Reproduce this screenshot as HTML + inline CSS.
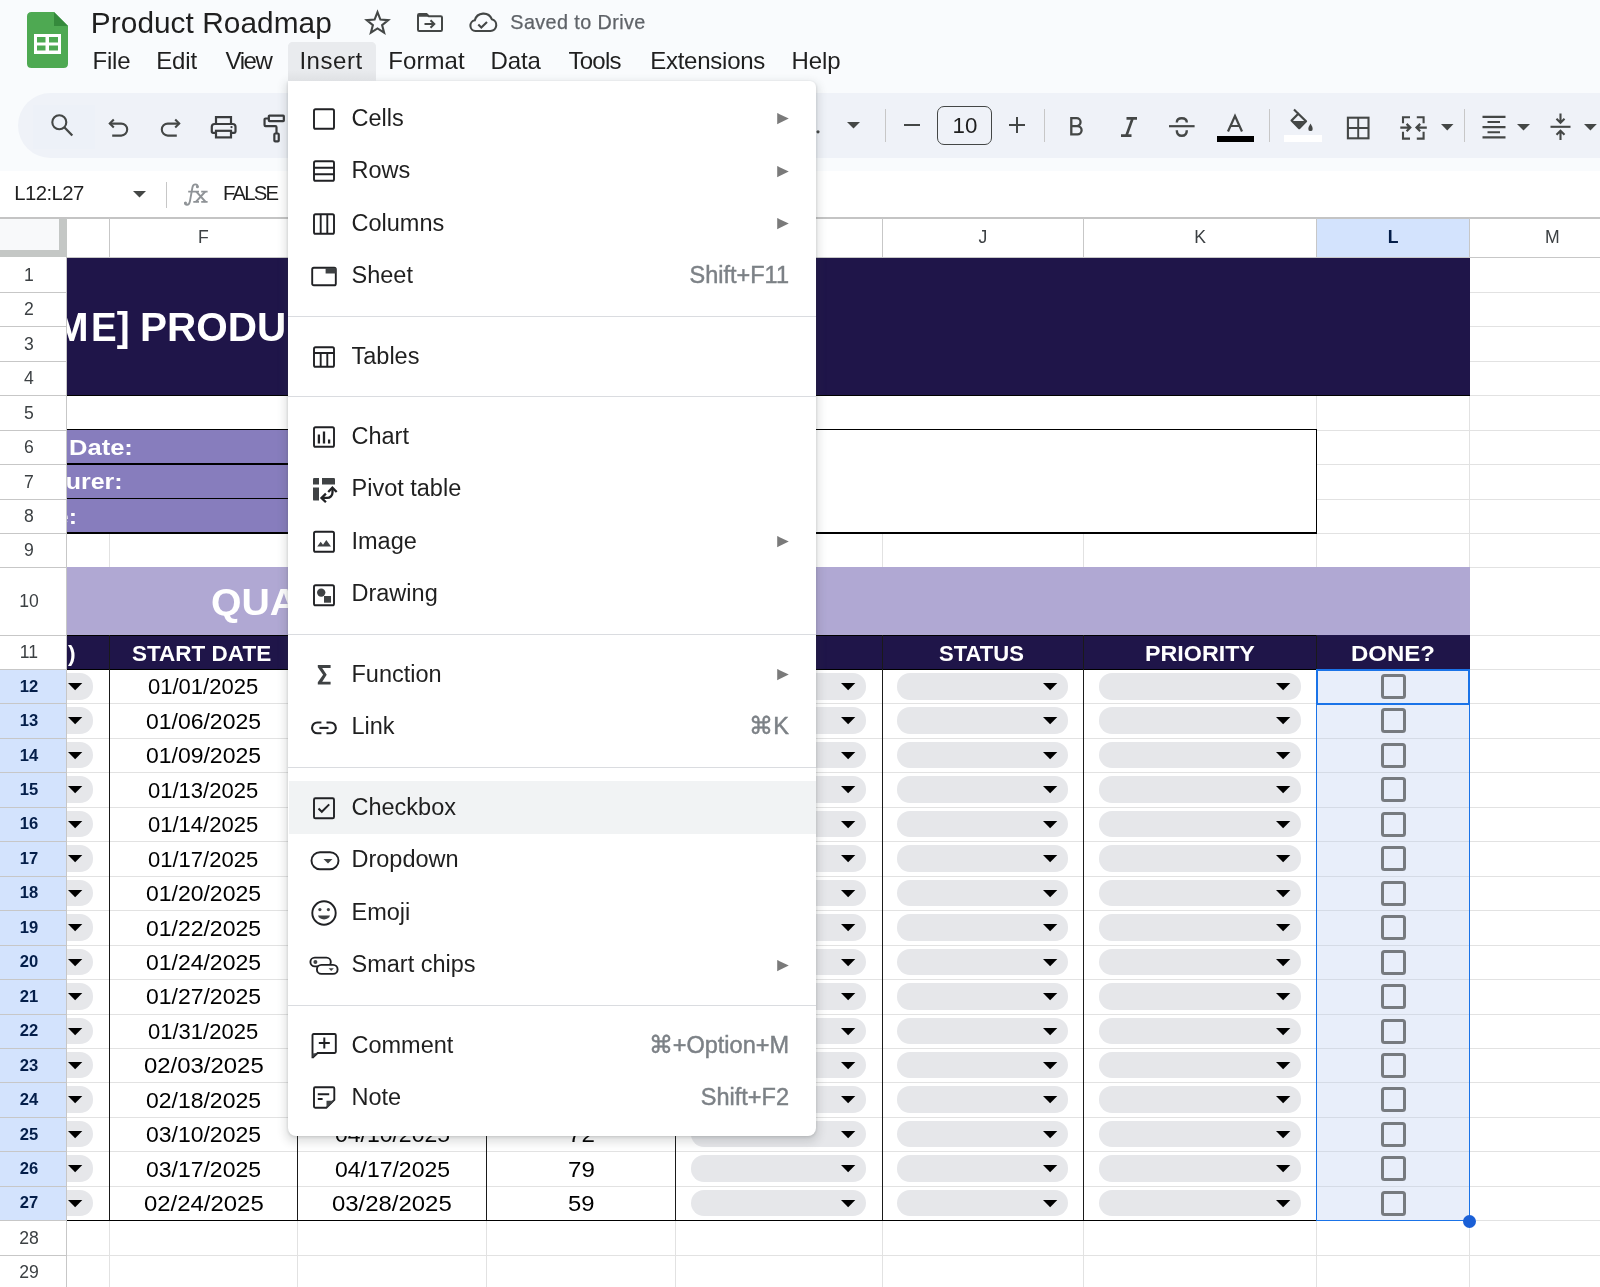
<!DOCTYPE html><html><head><meta charset="utf-8"><style>html,body{margin:0;padding:0;}body{width:1600px;height:1287px;overflow:hidden;position:relative;background:#f9fbfd;font-family:"Liberation Sans", sans-serif;}svg{display:block}</style></head><body><div style="position:absolute;left:0;top:0;width:1600px;height:1287px;overflow:hidden;will-change:transform">
<div style="position:absolute;left:0.00px;top:171.00px;width:1600.00px;height:1116.00px;background:#fff"></div>
<div style="position:absolute;left:67.00px;top:292.00px;width:1533.00px;height:1.00px;background:#e2e2e2"></div>
<div style="position:absolute;left:67.00px;top:326.00px;width:1533.00px;height:1.00px;background:#e2e2e2"></div>
<div style="position:absolute;left:67.00px;top:361.00px;width:1533.00px;height:1.00px;background:#e2e2e2"></div>
<div style="position:absolute;left:67.00px;top:395.00px;width:1533.00px;height:1.00px;background:#e2e2e2"></div>
<div style="position:absolute;left:67.00px;top:430.00px;width:1533.00px;height:1.00px;background:#e2e2e2"></div>
<div style="position:absolute;left:67.00px;top:464.00px;width:1533.00px;height:1.00px;background:#e2e2e2"></div>
<div style="position:absolute;left:67.00px;top:499.00px;width:1533.00px;height:1.00px;background:#e2e2e2"></div>
<div style="position:absolute;left:67.00px;top:533.00px;width:1533.00px;height:1.00px;background:#e2e2e2"></div>
<div style="position:absolute;left:67.00px;top:567.00px;width:1533.00px;height:1.00px;background:#e2e2e2"></div>
<div style="position:absolute;left:67.00px;top:635.00px;width:1533.00px;height:1.00px;background:#e2e2e2"></div>
<div style="position:absolute;left:67.00px;top:669.00px;width:1533.00px;height:1.00px;background:#e2e2e2"></div>
<div style="position:absolute;left:67.00px;top:703.00px;width:1533.00px;height:1.00px;background:#e2e2e2"></div>
<div style="position:absolute;left:67.00px;top:738.00px;width:1533.00px;height:1.00px;background:#e2e2e2"></div>
<div style="position:absolute;left:67.00px;top:772.00px;width:1533.00px;height:1.00px;background:#e2e2e2"></div>
<div style="position:absolute;left:67.00px;top:807.00px;width:1533.00px;height:1.00px;background:#e2e2e2"></div>
<div style="position:absolute;left:67.00px;top:841.00px;width:1533.00px;height:1.00px;background:#e2e2e2"></div>
<div style="position:absolute;left:67.00px;top:876.00px;width:1533.00px;height:1.00px;background:#e2e2e2"></div>
<div style="position:absolute;left:67.00px;top:910.00px;width:1533.00px;height:1.00px;background:#e2e2e2"></div>
<div style="position:absolute;left:67.00px;top:945.00px;width:1533.00px;height:1.00px;background:#e2e2e2"></div>
<div style="position:absolute;left:67.00px;top:979.00px;width:1533.00px;height:1.00px;background:#e2e2e2"></div>
<div style="position:absolute;left:67.00px;top:1014.00px;width:1533.00px;height:1.00px;background:#e2e2e2"></div>
<div style="position:absolute;left:67.00px;top:1048.00px;width:1533.00px;height:1.00px;background:#e2e2e2"></div>
<div style="position:absolute;left:67.00px;top:1082.00px;width:1533.00px;height:1.00px;background:#e2e2e2"></div>
<div style="position:absolute;left:67.00px;top:1117.00px;width:1533.00px;height:1.00px;background:#e2e2e2"></div>
<div style="position:absolute;left:67.00px;top:1151.00px;width:1533.00px;height:1.00px;background:#e2e2e2"></div>
<div style="position:absolute;left:67.00px;top:1186.00px;width:1533.00px;height:1.00px;background:#e2e2e2"></div>
<div style="position:absolute;left:67.00px;top:1220.00px;width:1533.00px;height:1.00px;background:#e2e2e2"></div>
<div style="position:absolute;left:67.00px;top:1255.00px;width:1533.00px;height:1.00px;background:#e2e2e2"></div>
<div style="position:absolute;left:67.00px;top:1289.00px;width:1533.00px;height:1.00px;background:#e2e2e2"></div>
<div style="position:absolute;left:109.00px;top:257.00px;width:1.00px;height:1030.00px;background:#e2e2e2"></div>
<div style="position:absolute;left:297.00px;top:257.00px;width:1.00px;height:1030.00px;background:#e2e2e2"></div>
<div style="position:absolute;left:486.00px;top:257.00px;width:1.00px;height:1030.00px;background:#e2e2e2"></div>
<div style="position:absolute;left:675.00px;top:257.00px;width:1.00px;height:1030.00px;background:#e2e2e2"></div>
<div style="position:absolute;left:882.00px;top:257.00px;width:1.00px;height:1030.00px;background:#e2e2e2"></div>
<div style="position:absolute;left:1083.00px;top:257.00px;width:1.00px;height:1030.00px;background:#e2e2e2"></div>
<div style="position:absolute;left:1316.00px;top:257.00px;width:1.00px;height:1030.00px;background:#e2e2e2"></div>
<div style="position:absolute;left:1469.00px;top:257.00px;width:1.00px;height:1030.00px;background:#e2e2e2"></div>
<div style="position:absolute;left:67.00px;top:258.00px;width:1403.00px;height:137.00px;background:#1f1549"></div>
<div style="position:absolute;left:67.00px;top:396.00px;width:1249.00px;height:34.00px;background:#fff"></div>
<div style="position:absolute;left:67.00px;top:430.00px;width:533.00px;height:104.00px;background:#877dbd"></div>
<div style="position:absolute;left:600.00px;top:430.00px;width:717.00px;height:104.00px;background:#fff"></div>
<div style="position:absolute;left:67.00px;top:428.80px;width:533.00px;height:1.40px;background:#000"></div>
<div style="position:absolute;left:67.00px;top:463.30px;width:533.00px;height:1.40px;background:#000"></div>
<div style="position:absolute;left:67.00px;top:497.80px;width:533.00px;height:1.40px;background:#000"></div>
<div style="position:absolute;left:67.00px;top:532.30px;width:533.00px;height:1.40px;background:#000"></div>
<div style="position:absolute;left:600.00px;top:428.80px;width:717.40px;height:1.40px;background:#000"></div>
<div style="position:absolute;left:600.00px;top:532.30px;width:717.40px;height:1.40px;background:#000"></div>
<div style="position:absolute;left:1316.00px;top:428.80px;width:1.40px;height:104.90px;background:#000"></div>
<div style="position:absolute;left:67.00px;top:394.60px;width:1403.00px;height:1.00px;background:#000"></div>
<div style="position:absolute;left:67.00px;top:567.00px;width:1403.00px;height:68.00px;background:#b0a8d3"></div>
<div style="position:absolute;left:67.00px;top:635.00px;width:1250.00px;height:34.00px;background:#1f1549"></div>
<div style="position:absolute;left:1317.00px;top:635.00px;width:153.00px;height:34.00px;background:#1f1549"></div>
<div style="position:absolute;left:67.00px;top:634.50px;width:1250.00px;height:1.50px;background:#000"></div>
<div style="position:absolute;left:67.00px;top:668.50px;width:1250.00px;height:1.50px;background:#000"></div>
<div style="position:absolute;left:108.55px;top:635.00px;width:1.40px;height:586.00px;background:#1a1a1a"></div>
<div style="position:absolute;left:296.55px;top:635.00px;width:1.40px;height:586.00px;background:#1a1a1a"></div>
<div style="position:absolute;left:485.55px;top:635.00px;width:1.40px;height:586.00px;background:#1a1a1a"></div>
<div style="position:absolute;left:674.55px;top:635.00px;width:1.40px;height:586.00px;background:#1a1a1a"></div>
<div style="position:absolute;left:881.55px;top:635.00px;width:1.40px;height:586.00px;background:#1a1a1a"></div>
<div style="position:absolute;left:1082.55px;top:635.00px;width:1.40px;height:586.00px;background:#1a1a1a"></div>
<div style="position:absolute;left:1315.55px;top:635.00px;width:1.40px;height:586.00px;background:#1a1a1a"></div>
<div style="position:absolute;left:67.00px;top:1219.70px;width:1250.00px;height:1.60px;background:#000"></div>
<div style="left:91.18px;position:absolute;top:302.84px;font-size:40.3px;line-height:49px;color:#fff;font-weight:bold;white-space:nowrap;transform:scaleX(0.9550);transform-origin:0 0;">E]</div>
<div style="right:1511.50px;position:absolute;top:302.84px;font-size:40.3px;line-height:49px;color:#fff;font-weight:bold;white-space:nowrap;">M</div>
<div style="left:139.79px;position:absolute;top:302.84px;font-size:40.3px;line-height:49px;color:#fff;font-weight:bold;white-space:nowrap;transform:scaleX(1.0044);transform-origin:0 0;">PRODU</div>
<div style="left:69.09px;position:absolute;top:432.87px;font-size:22.9px;line-height:28px;color:#fff;font-weight:bold;white-space:nowrap;transform:scaleX(1.1153);transform-origin:0 0;">Date:</div>
<div style="right:1477.00px;position:absolute;top:467.37px;font-size:22.9px;line-height:28px;color:#fff;font-weight:bold;white-space:nowrap;transform:scaleX(1.09);transform-origin:100% 0;">Manufacturer:</div>
<div style="right:1523.00px;position:absolute;top:501.87px;font-size:22.9px;line-height:28px;color:#fff;font-weight:bold;white-space:nowrap;transform:scaleX(1.09);transform-origin:100% 0;">Name:</div>
<div style="left:211.00px;position:absolute;top:579.88px;font-size:37px;line-height:45px;color:#fff;font-weight:bold;white-space:nowrap;transform:scaleX(1.06);transform-origin:0 0;">QUARTERLY ROADMAP</div>
<div style="right:1524.50px;position:absolute;top:638.57px;font-size:22.9px;line-height:28px;color:#fff;font-weight:bold;white-space:nowrap;">)</div>
<div style="left:132.10px;position:absolute;top:638.87px;font-size:22.9px;line-height:28px;color:#fff;font-weight:bold;white-space:nowrap;transform:scaleX(0.9828);transform-origin:0 0;">START DATE</div>
<div style="left:938.96px;position:absolute;top:638.87px;font-size:22.9px;line-height:28px;color:#fff;font-weight:bold;white-space:nowrap;transform:scaleX(0.9628);transform-origin:0 0;">STATUS</div>
<div style="left:1145.24px;position:absolute;top:638.87px;font-size:22.9px;line-height:28px;color:#fff;font-weight:bold;white-space:nowrap;transform:scaleX(1.0165);transform-origin:0 0;">PRIORITY</div>
<div style="left:1351.09px;position:absolute;top:638.87px;font-size:22.9px;line-height:28px;color:#fff;font-weight:bold;white-space:nowrap;transform:scaleX(1.0479);transform-origin:0 0;">DONE?</div>
<div style="position:absolute;left:1316.70px;top:669.00px;width:152.90px;height:551.00px;background:#e8eefa"></div>
<div style="position:absolute;left:1317.00px;top:703.00px;width:152.00px;height:1.00px;background:#d5dbe6"></div>
<div style="position:absolute;left:1317.00px;top:738.00px;width:152.00px;height:1.00px;background:#d5dbe6"></div>
<div style="position:absolute;left:1317.00px;top:772.00px;width:152.00px;height:1.00px;background:#d5dbe6"></div>
<div style="position:absolute;left:1317.00px;top:807.00px;width:152.00px;height:1.00px;background:#d5dbe6"></div>
<div style="position:absolute;left:1317.00px;top:841.00px;width:152.00px;height:1.00px;background:#d5dbe6"></div>
<div style="position:absolute;left:1317.00px;top:876.00px;width:152.00px;height:1.00px;background:#d5dbe6"></div>
<div style="position:absolute;left:1317.00px;top:910.00px;width:152.00px;height:1.00px;background:#d5dbe6"></div>
<div style="position:absolute;left:1317.00px;top:945.00px;width:152.00px;height:1.00px;background:#d5dbe6"></div>
<div style="position:absolute;left:1317.00px;top:979.00px;width:152.00px;height:1.00px;background:#d5dbe6"></div>
<div style="position:absolute;left:1317.00px;top:1014.00px;width:152.00px;height:1.00px;background:#d5dbe6"></div>
<div style="position:absolute;left:1317.00px;top:1048.00px;width:152.00px;height:1.00px;background:#d5dbe6"></div>
<div style="position:absolute;left:1317.00px;top:1082.00px;width:152.00px;height:1.00px;background:#d5dbe6"></div>
<div style="position:absolute;left:1317.00px;top:1117.00px;width:152.00px;height:1.00px;background:#d5dbe6"></div>
<div style="position:absolute;left:1317.00px;top:1151.00px;width:152.00px;height:1.00px;background:#d5dbe6"></div>
<div style="position:absolute;left:1317.00px;top:1186.00px;width:152.00px;height:1.00px;background:#d5dbe6"></div>
<div style="left:148.34px;position:absolute;top:674.38px;font-size:21.4px;line-height:26px;color:#000;font-weight:normal;white-space:nowrap;transform:scaleX(1.0297);transform-origin:0 0;">01/01/2025</div>
<div style="position:absolute;left:40.00px;top:673.00px;width:53.30px;height:26.50px;background:#e6e7ea;border-radius:13px"></div>
<svg style="position:absolute;left:68.0px;top:683.0px;overflow:visible;" width="14.3" height="7.2" viewBox="0 0 14.3 7.2"><path d="M0 0H14.3L7.15 7.2Z" fill="#000"/></svg>
<div style="position:absolute;left:690.90px;top:673.00px;width:175.10px;height:26.50px;background:#e6e7ea;border-radius:13px"></div>
<svg style="position:absolute;left:840.7px;top:683.0px;overflow:visible;" width="14.3" height="7.2" viewBox="0 0 14.3 7.2"><path d="M0 0H14.3L7.15 7.2Z" fill="#000"/></svg>
<div style="position:absolute;left:897.30px;top:673.00px;width:171.10px;height:26.50px;background:#e6e7ea;border-radius:13px"></div>
<svg style="position:absolute;left:1043.1px;top:683.0px;overflow:visible;" width="14.3" height="7.2" viewBox="0 0 14.3 7.2"><path d="M0 0H14.3L7.15 7.2Z" fill="#000"/></svg>
<div style="position:absolute;left:1099.20px;top:673.00px;width:202.10px;height:26.50px;background:#e6e7ea;border-radius:13px"></div>
<svg style="position:absolute;left:1276.0px;top:683.0px;overflow:visible;" width="14.3" height="7.2" viewBox="0 0 14.3 7.2"><path d="M0 0H14.3L7.15 7.2Z" fill="#000"/></svg>
<div style="position:absolute;left:1380.60px;top:674.00px;width:25.40px;height:25.00px;box-sizing:border-box;border:3px solid #767a7f;border-radius:3.5px"></div>
<div style="left:145.98px;position:absolute;top:708.83px;font-size:21.4px;line-height:26px;color:#000;font-weight:normal;white-space:nowrap;transform:scaleX(1.0738);transform-origin:0 0;">01/06/2025</div>
<div style="position:absolute;left:40.00px;top:707.45px;width:53.30px;height:26.50px;background:#e6e7ea;border-radius:13px"></div>
<svg style="position:absolute;left:68.0px;top:717.45px;overflow:visible;" width="14.3" height="7.2" viewBox="0 0 14.3 7.2"><path d="M0 0H14.3L7.15 7.2Z" fill="#000"/></svg>
<div style="position:absolute;left:690.90px;top:707.45px;width:175.10px;height:26.50px;background:#e6e7ea;border-radius:13px"></div>
<svg style="position:absolute;left:840.7px;top:717.45px;overflow:visible;" width="14.3" height="7.2" viewBox="0 0 14.3 7.2"><path d="M0 0H14.3L7.15 7.2Z" fill="#000"/></svg>
<div style="position:absolute;left:897.30px;top:707.45px;width:171.10px;height:26.50px;background:#e6e7ea;border-radius:13px"></div>
<svg style="position:absolute;left:1043.1px;top:717.45px;overflow:visible;" width="14.3" height="7.2" viewBox="0 0 14.3 7.2"><path d="M0 0H14.3L7.15 7.2Z" fill="#000"/></svg>
<div style="position:absolute;left:1099.20px;top:707.45px;width:202.10px;height:26.50px;background:#e6e7ea;border-radius:13px"></div>
<svg style="position:absolute;left:1276.0px;top:717.45px;overflow:visible;" width="14.3" height="7.2" viewBox="0 0 14.3 7.2"><path d="M0 0H14.3L7.15 7.2Z" fill="#000"/></svg>
<div style="position:absolute;left:1380.60px;top:708.45px;width:25.40px;height:25.00px;box-sizing:border-box;border:3px solid #767a7f;border-radius:3.5px"></div>
<div style="left:145.98px;position:absolute;top:743.28px;font-size:21.4px;line-height:26px;color:#000;font-weight:normal;white-space:nowrap;transform:scaleX(1.0738);transform-origin:0 0;">01/09/2025</div>
<div style="position:absolute;left:40.00px;top:741.90px;width:53.30px;height:26.50px;background:#e6e7ea;border-radius:13px"></div>
<svg style="position:absolute;left:68.0px;top:751.9px;overflow:visible;" width="14.3" height="7.2" viewBox="0 0 14.3 7.2"><path d="M0 0H14.3L7.15 7.2Z" fill="#000"/></svg>
<div style="position:absolute;left:690.90px;top:741.90px;width:175.10px;height:26.50px;background:#e6e7ea;border-radius:13px"></div>
<svg style="position:absolute;left:840.7px;top:751.9px;overflow:visible;" width="14.3" height="7.2" viewBox="0 0 14.3 7.2"><path d="M0 0H14.3L7.15 7.2Z" fill="#000"/></svg>
<div style="position:absolute;left:897.30px;top:741.90px;width:171.10px;height:26.50px;background:#e6e7ea;border-radius:13px"></div>
<svg style="position:absolute;left:1043.1px;top:751.9px;overflow:visible;" width="14.3" height="7.2" viewBox="0 0 14.3 7.2"><path d="M0 0H14.3L7.15 7.2Z" fill="#000"/></svg>
<div style="position:absolute;left:1099.20px;top:741.90px;width:202.10px;height:26.50px;background:#e6e7ea;border-radius:13px"></div>
<svg style="position:absolute;left:1276.0px;top:751.9px;overflow:visible;" width="14.3" height="7.2" viewBox="0 0 14.3 7.2"><path d="M0 0H14.3L7.15 7.2Z" fill="#000"/></svg>
<div style="position:absolute;left:1380.60px;top:742.90px;width:25.40px;height:25.00px;box-sizing:border-box;border:3px solid #767a7f;border-radius:3.5px"></div>
<div style="left:148.34px;position:absolute;top:777.73px;font-size:21.4px;line-height:26px;color:#000;font-weight:normal;white-space:nowrap;transform:scaleX(1.0297);transform-origin:0 0;">01/13/2025</div>
<div style="position:absolute;left:40.00px;top:776.35px;width:53.30px;height:26.50px;background:#e6e7ea;border-radius:13px"></div>
<svg style="position:absolute;left:68.0px;top:786.35px;overflow:visible;" width="14.3" height="7.2" viewBox="0 0 14.3 7.2"><path d="M0 0H14.3L7.15 7.2Z" fill="#000"/></svg>
<div style="position:absolute;left:690.90px;top:776.35px;width:175.10px;height:26.50px;background:#e6e7ea;border-radius:13px"></div>
<svg style="position:absolute;left:840.7px;top:786.35px;overflow:visible;" width="14.3" height="7.2" viewBox="0 0 14.3 7.2"><path d="M0 0H14.3L7.15 7.2Z" fill="#000"/></svg>
<div style="position:absolute;left:897.30px;top:776.35px;width:171.10px;height:26.50px;background:#e6e7ea;border-radius:13px"></div>
<svg style="position:absolute;left:1043.1px;top:786.35px;overflow:visible;" width="14.3" height="7.2" viewBox="0 0 14.3 7.2"><path d="M0 0H14.3L7.15 7.2Z" fill="#000"/></svg>
<div style="position:absolute;left:1099.20px;top:776.35px;width:202.10px;height:26.50px;background:#e6e7ea;border-radius:13px"></div>
<svg style="position:absolute;left:1276.0px;top:786.35px;overflow:visible;" width="14.3" height="7.2" viewBox="0 0 14.3 7.2"><path d="M0 0H14.3L7.15 7.2Z" fill="#000"/></svg>
<div style="position:absolute;left:1380.60px;top:777.35px;width:25.40px;height:25.00px;box-sizing:border-box;border:3px solid #767a7f;border-radius:3.5px"></div>
<div style="left:148.34px;position:absolute;top:812.18px;font-size:21.4px;line-height:26px;color:#000;font-weight:normal;white-space:nowrap;transform:scaleX(1.0297);transform-origin:0 0;">01/14/2025</div>
<div style="position:absolute;left:40.00px;top:810.80px;width:53.30px;height:26.50px;background:#e6e7ea;border-radius:13px"></div>
<svg style="position:absolute;left:68.0px;top:820.8px;overflow:visible;" width="14.3" height="7.2" viewBox="0 0 14.3 7.2"><path d="M0 0H14.3L7.15 7.2Z" fill="#000"/></svg>
<div style="position:absolute;left:690.90px;top:810.80px;width:175.10px;height:26.50px;background:#e6e7ea;border-radius:13px"></div>
<svg style="position:absolute;left:840.7px;top:820.8px;overflow:visible;" width="14.3" height="7.2" viewBox="0 0 14.3 7.2"><path d="M0 0H14.3L7.15 7.2Z" fill="#000"/></svg>
<div style="position:absolute;left:897.30px;top:810.80px;width:171.10px;height:26.50px;background:#e6e7ea;border-radius:13px"></div>
<svg style="position:absolute;left:1043.1px;top:820.8px;overflow:visible;" width="14.3" height="7.2" viewBox="0 0 14.3 7.2"><path d="M0 0H14.3L7.15 7.2Z" fill="#000"/></svg>
<div style="position:absolute;left:1099.20px;top:810.80px;width:202.10px;height:26.50px;background:#e6e7ea;border-radius:13px"></div>
<svg style="position:absolute;left:1276.0px;top:820.8px;overflow:visible;" width="14.3" height="7.2" viewBox="0 0 14.3 7.2"><path d="M0 0H14.3L7.15 7.2Z" fill="#000"/></svg>
<div style="position:absolute;left:1380.60px;top:811.80px;width:25.40px;height:25.00px;box-sizing:border-box;border:3px solid #767a7f;border-radius:3.5px"></div>
<div style="left:148.34px;position:absolute;top:846.63px;font-size:21.4px;line-height:26px;color:#000;font-weight:normal;white-space:nowrap;transform:scaleX(1.0297);transform-origin:0 0;">01/17/2025</div>
<div style="position:absolute;left:40.00px;top:845.25px;width:53.30px;height:26.50px;background:#e6e7ea;border-radius:13px"></div>
<svg style="position:absolute;left:68.0px;top:855.25px;overflow:visible;" width="14.3" height="7.2" viewBox="0 0 14.3 7.2"><path d="M0 0H14.3L7.15 7.2Z" fill="#000"/></svg>
<div style="position:absolute;left:690.90px;top:845.25px;width:175.10px;height:26.50px;background:#e6e7ea;border-radius:13px"></div>
<svg style="position:absolute;left:840.7px;top:855.25px;overflow:visible;" width="14.3" height="7.2" viewBox="0 0 14.3 7.2"><path d="M0 0H14.3L7.15 7.2Z" fill="#000"/></svg>
<div style="position:absolute;left:897.30px;top:845.25px;width:171.10px;height:26.50px;background:#e6e7ea;border-radius:13px"></div>
<svg style="position:absolute;left:1043.1px;top:855.25px;overflow:visible;" width="14.3" height="7.2" viewBox="0 0 14.3 7.2"><path d="M0 0H14.3L7.15 7.2Z" fill="#000"/></svg>
<div style="position:absolute;left:1099.20px;top:845.25px;width:202.10px;height:26.50px;background:#e6e7ea;border-radius:13px"></div>
<svg style="position:absolute;left:1276.0px;top:855.25px;overflow:visible;" width="14.3" height="7.2" viewBox="0 0 14.3 7.2"><path d="M0 0H14.3L7.15 7.2Z" fill="#000"/></svg>
<div style="position:absolute;left:1380.60px;top:846.25px;width:25.40px;height:25.00px;box-sizing:border-box;border:3px solid #767a7f;border-radius:3.5px"></div>
<div style="left:145.98px;position:absolute;top:881.08px;font-size:21.4px;line-height:26px;color:#000;font-weight:normal;white-space:nowrap;transform:scaleX(1.0738);transform-origin:0 0;">01/20/2025</div>
<div style="position:absolute;left:40.00px;top:879.70px;width:53.30px;height:26.50px;background:#e6e7ea;border-radius:13px"></div>
<svg style="position:absolute;left:68.0px;top:889.7px;overflow:visible;" width="14.3" height="7.2" viewBox="0 0 14.3 7.2"><path d="M0 0H14.3L7.15 7.2Z" fill="#000"/></svg>
<div style="position:absolute;left:690.90px;top:879.70px;width:175.10px;height:26.50px;background:#e6e7ea;border-radius:13px"></div>
<svg style="position:absolute;left:840.7px;top:889.7px;overflow:visible;" width="14.3" height="7.2" viewBox="0 0 14.3 7.2"><path d="M0 0H14.3L7.15 7.2Z" fill="#000"/></svg>
<div style="position:absolute;left:897.30px;top:879.70px;width:171.10px;height:26.50px;background:#e6e7ea;border-radius:13px"></div>
<svg style="position:absolute;left:1043.1px;top:889.7px;overflow:visible;" width="14.3" height="7.2" viewBox="0 0 14.3 7.2"><path d="M0 0H14.3L7.15 7.2Z" fill="#000"/></svg>
<div style="position:absolute;left:1099.20px;top:879.70px;width:202.10px;height:26.50px;background:#e6e7ea;border-radius:13px"></div>
<svg style="position:absolute;left:1276.0px;top:889.7px;overflow:visible;" width="14.3" height="7.2" viewBox="0 0 14.3 7.2"><path d="M0 0H14.3L7.15 7.2Z" fill="#000"/></svg>
<div style="position:absolute;left:1380.60px;top:880.70px;width:25.40px;height:25.00px;box-sizing:border-box;border:3px solid #767a7f;border-radius:3.5px"></div>
<div style="left:145.98px;position:absolute;top:915.53px;font-size:21.4px;line-height:26px;color:#000;font-weight:normal;white-space:nowrap;transform:scaleX(1.0738);transform-origin:0 0;">01/22/2025</div>
<div style="position:absolute;left:40.00px;top:914.15px;width:53.30px;height:26.50px;background:#e6e7ea;border-radius:13px"></div>
<svg style="position:absolute;left:68.0px;top:924.1500000000001px;overflow:visible;" width="14.3" height="7.2" viewBox="0 0 14.3 7.2"><path d="M0 0H14.3L7.15 7.2Z" fill="#000"/></svg>
<div style="position:absolute;left:690.90px;top:914.15px;width:175.10px;height:26.50px;background:#e6e7ea;border-radius:13px"></div>
<svg style="position:absolute;left:840.7px;top:924.1500000000001px;overflow:visible;" width="14.3" height="7.2" viewBox="0 0 14.3 7.2"><path d="M0 0H14.3L7.15 7.2Z" fill="#000"/></svg>
<div style="position:absolute;left:897.30px;top:914.15px;width:171.10px;height:26.50px;background:#e6e7ea;border-radius:13px"></div>
<svg style="position:absolute;left:1043.1px;top:924.1500000000001px;overflow:visible;" width="14.3" height="7.2" viewBox="0 0 14.3 7.2"><path d="M0 0H14.3L7.15 7.2Z" fill="#000"/></svg>
<div style="position:absolute;left:1099.20px;top:914.15px;width:202.10px;height:26.50px;background:#e6e7ea;border-radius:13px"></div>
<svg style="position:absolute;left:1276.0px;top:924.1500000000001px;overflow:visible;" width="14.3" height="7.2" viewBox="0 0 14.3 7.2"><path d="M0 0H14.3L7.15 7.2Z" fill="#000"/></svg>
<div style="position:absolute;left:1380.60px;top:915.15px;width:25.40px;height:25.00px;box-sizing:border-box;border:3px solid #767a7f;border-radius:3.5px"></div>
<div style="left:145.98px;position:absolute;top:949.98px;font-size:21.4px;line-height:26px;color:#000;font-weight:normal;white-space:nowrap;transform:scaleX(1.0738);transform-origin:0 0;">01/24/2025</div>
<div style="position:absolute;left:40.00px;top:948.60px;width:53.30px;height:26.50px;background:#e6e7ea;border-radius:13px"></div>
<svg style="position:absolute;left:68.0px;top:958.6px;overflow:visible;" width="14.3" height="7.2" viewBox="0 0 14.3 7.2"><path d="M0 0H14.3L7.15 7.2Z" fill="#000"/></svg>
<div style="position:absolute;left:690.90px;top:948.60px;width:175.10px;height:26.50px;background:#e6e7ea;border-radius:13px"></div>
<svg style="position:absolute;left:840.7px;top:958.6px;overflow:visible;" width="14.3" height="7.2" viewBox="0 0 14.3 7.2"><path d="M0 0H14.3L7.15 7.2Z" fill="#000"/></svg>
<div style="position:absolute;left:897.30px;top:948.60px;width:171.10px;height:26.50px;background:#e6e7ea;border-radius:13px"></div>
<svg style="position:absolute;left:1043.1px;top:958.6px;overflow:visible;" width="14.3" height="7.2" viewBox="0 0 14.3 7.2"><path d="M0 0H14.3L7.15 7.2Z" fill="#000"/></svg>
<div style="position:absolute;left:1099.20px;top:948.60px;width:202.10px;height:26.50px;background:#e6e7ea;border-radius:13px"></div>
<svg style="position:absolute;left:1276.0px;top:958.6px;overflow:visible;" width="14.3" height="7.2" viewBox="0 0 14.3 7.2"><path d="M0 0H14.3L7.15 7.2Z" fill="#000"/></svg>
<div style="position:absolute;left:1380.60px;top:949.60px;width:25.40px;height:25.00px;box-sizing:border-box;border:3px solid #767a7f;border-radius:3.5px"></div>
<div style="left:145.98px;position:absolute;top:984.43px;font-size:21.4px;line-height:26px;color:#000;font-weight:normal;white-space:nowrap;transform:scaleX(1.0738);transform-origin:0 0;">01/27/2025</div>
<div style="position:absolute;left:40.00px;top:983.05px;width:53.30px;height:26.50px;background:#e6e7ea;border-radius:13px"></div>
<svg style="position:absolute;left:68.0px;top:993.05px;overflow:visible;" width="14.3" height="7.2" viewBox="0 0 14.3 7.2"><path d="M0 0H14.3L7.15 7.2Z" fill="#000"/></svg>
<div style="position:absolute;left:690.90px;top:983.05px;width:175.10px;height:26.50px;background:#e6e7ea;border-radius:13px"></div>
<svg style="position:absolute;left:840.7px;top:993.05px;overflow:visible;" width="14.3" height="7.2" viewBox="0 0 14.3 7.2"><path d="M0 0H14.3L7.15 7.2Z" fill="#000"/></svg>
<div style="position:absolute;left:897.30px;top:983.05px;width:171.10px;height:26.50px;background:#e6e7ea;border-radius:13px"></div>
<svg style="position:absolute;left:1043.1px;top:993.05px;overflow:visible;" width="14.3" height="7.2" viewBox="0 0 14.3 7.2"><path d="M0 0H14.3L7.15 7.2Z" fill="#000"/></svg>
<div style="position:absolute;left:1099.20px;top:983.05px;width:202.10px;height:26.50px;background:#e6e7ea;border-radius:13px"></div>
<svg style="position:absolute;left:1276.0px;top:993.05px;overflow:visible;" width="14.3" height="7.2" viewBox="0 0 14.3 7.2"><path d="M0 0H14.3L7.15 7.2Z" fill="#000"/></svg>
<div style="position:absolute;left:1380.60px;top:984.05px;width:25.40px;height:25.00px;box-sizing:border-box;border:3px solid #767a7f;border-radius:3.5px"></div>
<div style="left:148.34px;position:absolute;top:1018.88px;font-size:21.4px;line-height:26px;color:#000;font-weight:normal;white-space:nowrap;transform:scaleX(1.0297);transform-origin:0 0;">01/31/2025</div>
<div style="position:absolute;left:40.00px;top:1017.50px;width:53.30px;height:26.50px;background:#e6e7ea;border-radius:13px"></div>
<svg style="position:absolute;left:68.0px;top:1027.5px;overflow:visible;" width="14.3" height="7.2" viewBox="0 0 14.3 7.2"><path d="M0 0H14.3L7.15 7.2Z" fill="#000"/></svg>
<div style="position:absolute;left:690.90px;top:1017.50px;width:175.10px;height:26.50px;background:#e6e7ea;border-radius:13px"></div>
<svg style="position:absolute;left:840.7px;top:1027.5px;overflow:visible;" width="14.3" height="7.2" viewBox="0 0 14.3 7.2"><path d="M0 0H14.3L7.15 7.2Z" fill="#000"/></svg>
<div style="position:absolute;left:897.30px;top:1017.50px;width:171.10px;height:26.50px;background:#e6e7ea;border-radius:13px"></div>
<svg style="position:absolute;left:1043.1px;top:1027.5px;overflow:visible;" width="14.3" height="7.2" viewBox="0 0 14.3 7.2"><path d="M0 0H14.3L7.15 7.2Z" fill="#000"/></svg>
<div style="position:absolute;left:1099.20px;top:1017.50px;width:202.10px;height:26.50px;background:#e6e7ea;border-radius:13px"></div>
<svg style="position:absolute;left:1276.0px;top:1027.5px;overflow:visible;" width="14.3" height="7.2" viewBox="0 0 14.3 7.2"><path d="M0 0H14.3L7.15 7.2Z" fill="#000"/></svg>
<div style="position:absolute;left:1380.60px;top:1018.50px;width:25.40px;height:25.00px;box-sizing:border-box;border:3px solid #767a7f;border-radius:3.5px"></div>
<div style="left:143.62px;position:absolute;top:1053.33px;font-size:21.4px;line-height:26px;color:#000;font-weight:normal;white-space:nowrap;transform:scaleX(1.1180);transform-origin:0 0;">02/03/2025</div>
<div style="position:absolute;left:40.00px;top:1051.95px;width:53.30px;height:26.50px;background:#e6e7ea;border-radius:13px"></div>
<svg style="position:absolute;left:68.0px;top:1061.95px;overflow:visible;" width="14.3" height="7.2" viewBox="0 0 14.3 7.2"><path d="M0 0H14.3L7.15 7.2Z" fill="#000"/></svg>
<div style="position:absolute;left:690.90px;top:1051.95px;width:175.10px;height:26.50px;background:#e6e7ea;border-radius:13px"></div>
<svg style="position:absolute;left:840.7px;top:1061.95px;overflow:visible;" width="14.3" height="7.2" viewBox="0 0 14.3 7.2"><path d="M0 0H14.3L7.15 7.2Z" fill="#000"/></svg>
<div style="position:absolute;left:897.30px;top:1051.95px;width:171.10px;height:26.50px;background:#e6e7ea;border-radius:13px"></div>
<svg style="position:absolute;left:1043.1px;top:1061.95px;overflow:visible;" width="14.3" height="7.2" viewBox="0 0 14.3 7.2"><path d="M0 0H14.3L7.15 7.2Z" fill="#000"/></svg>
<div style="position:absolute;left:1099.20px;top:1051.95px;width:202.10px;height:26.50px;background:#e6e7ea;border-radius:13px"></div>
<svg style="position:absolute;left:1276.0px;top:1061.95px;overflow:visible;" width="14.3" height="7.2" viewBox="0 0 14.3 7.2"><path d="M0 0H14.3L7.15 7.2Z" fill="#000"/></svg>
<div style="position:absolute;left:1380.60px;top:1052.95px;width:25.40px;height:25.00px;box-sizing:border-box;border:3px solid #767a7f;border-radius:3.5px"></div>
<div style="left:145.98px;position:absolute;top:1087.78px;font-size:21.4px;line-height:26px;color:#000;font-weight:normal;white-space:nowrap;transform:scaleX(1.0738);transform-origin:0 0;">02/18/2025</div>
<div style="position:absolute;left:40.00px;top:1086.40px;width:53.30px;height:26.50px;background:#e6e7ea;border-radius:13px"></div>
<svg style="position:absolute;left:68.0px;top:1096.4px;overflow:visible;" width="14.3" height="7.2" viewBox="0 0 14.3 7.2"><path d="M0 0H14.3L7.15 7.2Z" fill="#000"/></svg>
<div style="position:absolute;left:690.90px;top:1086.40px;width:175.10px;height:26.50px;background:#e6e7ea;border-radius:13px"></div>
<svg style="position:absolute;left:840.7px;top:1096.4px;overflow:visible;" width="14.3" height="7.2" viewBox="0 0 14.3 7.2"><path d="M0 0H14.3L7.15 7.2Z" fill="#000"/></svg>
<div style="position:absolute;left:897.30px;top:1086.40px;width:171.10px;height:26.50px;background:#e6e7ea;border-radius:13px"></div>
<svg style="position:absolute;left:1043.1px;top:1096.4px;overflow:visible;" width="14.3" height="7.2" viewBox="0 0 14.3 7.2"><path d="M0 0H14.3L7.15 7.2Z" fill="#000"/></svg>
<div style="position:absolute;left:1099.20px;top:1086.40px;width:202.10px;height:26.50px;background:#e6e7ea;border-radius:13px"></div>
<svg style="position:absolute;left:1276.0px;top:1096.4px;overflow:visible;" width="14.3" height="7.2" viewBox="0 0 14.3 7.2"><path d="M0 0H14.3L7.15 7.2Z" fill="#000"/></svg>
<div style="position:absolute;left:1380.60px;top:1087.40px;width:25.40px;height:25.00px;box-sizing:border-box;border:3px solid #767a7f;border-radius:3.5px"></div>
<div style="left:145.98px;position:absolute;top:1122.23px;font-size:21.4px;line-height:26px;color:#000;font-weight:normal;white-space:nowrap;transform:scaleX(1.0738);transform-origin:0 0;">03/10/2025</div>
<div style="left:334.73px;position:absolute;top:1122.23px;font-size:21.4px;line-height:26px;color:#000;font-weight:normal;white-space:nowrap;transform:scaleX(1.0738);transform-origin:0 0;">04/10/2025</div>
<div style="left:567.56px;position:absolute;top:1122.23px;font-size:21.4px;line-height:26px;color:#000;font-weight:normal;white-space:nowrap;transform:scaleX(1.1281);transform-origin:0 0;">72</div>
<div style="position:absolute;left:40.00px;top:1120.85px;width:53.30px;height:26.50px;background:#e6e7ea;border-radius:13px"></div>
<svg style="position:absolute;left:68.0px;top:1130.85px;overflow:visible;" width="14.3" height="7.2" viewBox="0 0 14.3 7.2"><path d="M0 0H14.3L7.15 7.2Z" fill="#000"/></svg>
<div style="position:absolute;left:690.90px;top:1120.85px;width:175.10px;height:26.50px;background:#e6e7ea;border-radius:13px"></div>
<svg style="position:absolute;left:840.7px;top:1130.85px;overflow:visible;" width="14.3" height="7.2" viewBox="0 0 14.3 7.2"><path d="M0 0H14.3L7.15 7.2Z" fill="#000"/></svg>
<div style="position:absolute;left:897.30px;top:1120.85px;width:171.10px;height:26.50px;background:#e6e7ea;border-radius:13px"></div>
<svg style="position:absolute;left:1043.1px;top:1130.85px;overflow:visible;" width="14.3" height="7.2" viewBox="0 0 14.3 7.2"><path d="M0 0H14.3L7.15 7.2Z" fill="#000"/></svg>
<div style="position:absolute;left:1099.20px;top:1120.85px;width:202.10px;height:26.50px;background:#e6e7ea;border-radius:13px"></div>
<svg style="position:absolute;left:1276.0px;top:1130.85px;overflow:visible;" width="14.3" height="7.2" viewBox="0 0 14.3 7.2"><path d="M0 0H14.3L7.15 7.2Z" fill="#000"/></svg>
<div style="position:absolute;left:1380.60px;top:1121.85px;width:25.40px;height:25.00px;box-sizing:border-box;border:3px solid #767a7f;border-radius:3.5px"></div>
<div style="left:145.98px;position:absolute;top:1156.68px;font-size:21.4px;line-height:26px;color:#000;font-weight:normal;white-space:nowrap;transform:scaleX(1.0738);transform-origin:0 0;">03/17/2025</div>
<div style="left:334.73px;position:absolute;top:1156.68px;font-size:21.4px;line-height:26px;color:#000;font-weight:normal;white-space:nowrap;transform:scaleX(1.0738);transform-origin:0 0;">04/17/2025</div>
<div style="left:567.57px;position:absolute;top:1156.68px;font-size:21.4px;line-height:26px;color:#000;font-weight:normal;white-space:nowrap;transform:scaleX(1.1248);transform-origin:0 0;">79</div>
<div style="position:absolute;left:40.00px;top:1155.30px;width:53.30px;height:26.50px;background:#e6e7ea;border-radius:13px"></div>
<svg style="position:absolute;left:68.0px;top:1165.3000000000002px;overflow:visible;" width="14.3" height="7.2" viewBox="0 0 14.3 7.2"><path d="M0 0H14.3L7.15 7.2Z" fill="#000"/></svg>
<div style="position:absolute;left:690.90px;top:1155.30px;width:175.10px;height:26.50px;background:#e6e7ea;border-radius:13px"></div>
<svg style="position:absolute;left:840.7px;top:1165.3000000000002px;overflow:visible;" width="14.3" height="7.2" viewBox="0 0 14.3 7.2"><path d="M0 0H14.3L7.15 7.2Z" fill="#000"/></svg>
<div style="position:absolute;left:897.30px;top:1155.30px;width:171.10px;height:26.50px;background:#e6e7ea;border-radius:13px"></div>
<svg style="position:absolute;left:1043.1px;top:1165.3000000000002px;overflow:visible;" width="14.3" height="7.2" viewBox="0 0 14.3 7.2"><path d="M0 0H14.3L7.15 7.2Z" fill="#000"/></svg>
<div style="position:absolute;left:1099.20px;top:1155.30px;width:202.10px;height:26.50px;background:#e6e7ea;border-radius:13px"></div>
<svg style="position:absolute;left:1276.0px;top:1165.3000000000002px;overflow:visible;" width="14.3" height="7.2" viewBox="0 0 14.3 7.2"><path d="M0 0H14.3L7.15 7.2Z" fill="#000"/></svg>
<div style="position:absolute;left:1380.60px;top:1156.30px;width:25.40px;height:25.00px;box-sizing:border-box;border:3px solid #767a7f;border-radius:3.5px"></div>
<div style="left:143.62px;position:absolute;top:1191.13px;font-size:21.4px;line-height:26px;color:#000;font-weight:normal;white-space:nowrap;transform:scaleX(1.1180);transform-origin:0 0;">02/24/2025</div>
<div style="left:332.37px;position:absolute;top:1191.13px;font-size:21.4px;line-height:26px;color:#000;font-weight:normal;white-space:nowrap;transform:scaleX(1.1180);transform-origin:0 0;">03/28/2025</div>
<div style="left:567.85px;position:absolute;top:1191.13px;font-size:21.4px;line-height:26px;color:#000;font-weight:normal;white-space:nowrap;transform:scaleX(1.1125);transform-origin:0 0;">59</div>
<div style="position:absolute;left:40.00px;top:1189.75px;width:53.30px;height:26.50px;background:#e6e7ea;border-radius:13px"></div>
<svg style="position:absolute;left:68.0px;top:1199.75px;overflow:visible;" width="14.3" height="7.2" viewBox="0 0 14.3 7.2"><path d="M0 0H14.3L7.15 7.2Z" fill="#000"/></svg>
<div style="position:absolute;left:690.90px;top:1189.75px;width:175.10px;height:26.50px;background:#e6e7ea;border-radius:13px"></div>
<svg style="position:absolute;left:840.7px;top:1199.75px;overflow:visible;" width="14.3" height="7.2" viewBox="0 0 14.3 7.2"><path d="M0 0H14.3L7.15 7.2Z" fill="#000"/></svg>
<div style="position:absolute;left:897.30px;top:1189.75px;width:171.10px;height:26.50px;background:#e6e7ea;border-radius:13px"></div>
<svg style="position:absolute;left:1043.1px;top:1199.75px;overflow:visible;" width="14.3" height="7.2" viewBox="0 0 14.3 7.2"><path d="M0 0H14.3L7.15 7.2Z" fill="#000"/></svg>
<div style="position:absolute;left:1099.20px;top:1189.75px;width:202.10px;height:26.50px;background:#e6e7ea;border-radius:13px"></div>
<svg style="position:absolute;left:1276.0px;top:1199.75px;overflow:visible;" width="14.3" height="7.2" viewBox="0 0 14.3 7.2"><path d="M0 0H14.3L7.15 7.2Z" fill="#000"/></svg>
<div style="position:absolute;left:1380.60px;top:1190.75px;width:25.40px;height:25.00px;box-sizing:border-box;border:3px solid #767a7f;border-radius:3.5px"></div>
<div style="position:absolute;left:1316.20px;top:668.50px;width:154.00px;height:552.00px;box-sizing:border-box;border:1.5px solid #1a73e8"></div>
<div style="position:absolute;left:1316.20px;top:668.50px;width:154.00px;height:36.00px;box-sizing:border-box;border:2.5px solid #1a73e8"></div>
<div style="position:absolute;left:1463.10px;top:1214.70px;width:13.00px;height:13.00px;background:#1a5fd6;border-radius:50%;border:0px solid #fff"></div>
<div style="position:absolute;left:67.00px;top:218.00px;width:1533.00px;height:39.50px;background:#fff"></div>
<div style="position:absolute;left:0.00px;top:217.00px;width:1600.00px;height:2.00px;background:#c4c4c4"></div>
<div style="position:absolute;left:67.00px;top:257.00px;width:1533.00px;height:1.00px;background:#c7c7c7"></div>
<div style="position:absolute;left:1316.70px;top:219.00px;width:152.90px;height:38.00px;background:#d3e3fd"></div>
<div style="position:absolute;left:109.00px;top:218.00px;width:1.00px;height:39.00px;background:#c7c7c7"></div>
<div style="position:absolute;left:297.00px;top:218.00px;width:1.00px;height:39.00px;background:#c7c7c7"></div>
<div style="position:absolute;left:486.00px;top:218.00px;width:1.00px;height:39.00px;background:#c7c7c7"></div>
<div style="position:absolute;left:675.00px;top:218.00px;width:1.00px;height:39.00px;background:#c7c7c7"></div>
<div style="position:absolute;left:882.00px;top:218.00px;width:1.00px;height:39.00px;background:#c7c7c7"></div>
<div style="position:absolute;left:1083.00px;top:218.00px;width:1.00px;height:39.00px;background:#c7c7c7"></div>
<div style="position:absolute;left:1316.00px;top:218.00px;width:1.00px;height:39.00px;background:#c7c7c7"></div>
<div style="position:absolute;left:1469.00px;top:218.00px;width:1.00px;height:39.00px;background:#c7c7c7"></div>
<div style="left:109.00px;width:188.5px;text-align:center;position:absolute;top:226.20px;font-size:17.6px;line-height:22px;color:#3c4043;font-weight:normal;white-space:nowrap;">F</div>
<div style="left:882.20px;width:201.5999999999999px;text-align:center;position:absolute;top:226.20px;font-size:17.6px;line-height:22px;color:#3c4043;font-weight:normal;white-space:nowrap;">J</div>
<div style="left:1083.80px;width:232.9000000000001px;text-align:center;position:absolute;top:226.20px;font-size:17.6px;line-height:22px;color:#3c4043;font-weight:normal;white-space:nowrap;">K</div>
<div style="left:1469.60px;width:165.4000000000001px;text-align:center;position:absolute;top:226.20px;font-size:17.6px;line-height:22px;color:#3c4043;font-weight:normal;white-space:nowrap;">M</div>
<div style="left:1316.70px;width:152.89999999999986px;text-align:center;position:absolute;top:226.20px;font-size:17.6px;line-height:22px;color:#041e49;font-weight:bold;white-space:nowrap;">L</div>
<div style="position:absolute;left:0.00px;top:257.50px;width:66.50px;height:1029.50px;background:#fff"></div>
<div style="position:absolute;left:0.00px;top:669.00px;width:66.50px;height:551.00px;background:#d3e3fd"></div>
<div style="position:absolute;left:66.00px;top:218.00px;width:1.00px;height:1069.00px;background:#c7c7c7"></div>
<div style="position:absolute;left:0.00px;top:292.00px;width:66.50px;height:1.00px;background:#c7c7c7"></div>
<div style="position:absolute;left:0.00px;top:326.00px;width:66.50px;height:1.00px;background:#c7c7c7"></div>
<div style="position:absolute;left:0.00px;top:361.00px;width:66.50px;height:1.00px;background:#c7c7c7"></div>
<div style="position:absolute;left:0.00px;top:395.00px;width:66.50px;height:1.00px;background:#c7c7c7"></div>
<div style="position:absolute;left:0.00px;top:430.00px;width:66.50px;height:1.00px;background:#c7c7c7"></div>
<div style="position:absolute;left:0.00px;top:464.00px;width:66.50px;height:1.00px;background:#c7c7c7"></div>
<div style="position:absolute;left:0.00px;top:499.00px;width:66.50px;height:1.00px;background:#c7c7c7"></div>
<div style="position:absolute;left:0.00px;top:533.00px;width:66.50px;height:1.00px;background:#c7c7c7"></div>
<div style="position:absolute;left:0.00px;top:567.00px;width:66.50px;height:1.00px;background:#c7c7c7"></div>
<div style="position:absolute;left:0.00px;top:635.00px;width:66.50px;height:1.00px;background:#c7c7c7"></div>
<div style="position:absolute;left:0.00px;top:669.00px;width:66.50px;height:1.00px;background:#c7c7c7"></div>
<div style="position:absolute;left:0.00px;top:703.00px;width:66.50px;height:1.00px;background:#c7c7c7"></div>
<div style="position:absolute;left:0.00px;top:738.00px;width:66.50px;height:1.00px;background:#c7c7c7"></div>
<div style="position:absolute;left:0.00px;top:772.00px;width:66.50px;height:1.00px;background:#c7c7c7"></div>
<div style="position:absolute;left:0.00px;top:807.00px;width:66.50px;height:1.00px;background:#c7c7c7"></div>
<div style="position:absolute;left:0.00px;top:841.00px;width:66.50px;height:1.00px;background:#c7c7c7"></div>
<div style="position:absolute;left:0.00px;top:876.00px;width:66.50px;height:1.00px;background:#c7c7c7"></div>
<div style="position:absolute;left:0.00px;top:910.00px;width:66.50px;height:1.00px;background:#c7c7c7"></div>
<div style="position:absolute;left:0.00px;top:945.00px;width:66.50px;height:1.00px;background:#c7c7c7"></div>
<div style="position:absolute;left:0.00px;top:979.00px;width:66.50px;height:1.00px;background:#c7c7c7"></div>
<div style="position:absolute;left:0.00px;top:1014.00px;width:66.50px;height:1.00px;background:#c7c7c7"></div>
<div style="position:absolute;left:0.00px;top:1048.00px;width:66.50px;height:1.00px;background:#c7c7c7"></div>
<div style="position:absolute;left:0.00px;top:1082.00px;width:66.50px;height:1.00px;background:#c7c7c7"></div>
<div style="position:absolute;left:0.00px;top:1117.00px;width:66.50px;height:1.00px;background:#c7c7c7"></div>
<div style="position:absolute;left:0.00px;top:1151.00px;width:66.50px;height:1.00px;background:#c7c7c7"></div>
<div style="position:absolute;left:0.00px;top:1186.00px;width:66.50px;height:1.00px;background:#c7c7c7"></div>
<div style="position:absolute;left:0.00px;top:1220.00px;width:66.50px;height:1.00px;background:#c7c7c7"></div>
<div style="position:absolute;left:0.00px;top:1255.00px;width:66.50px;height:1.00px;background:#c7c7c7"></div>
<div style="position:absolute;left:0.00px;top:1289.00px;width:66.50px;height:1.00px;background:#c7c7c7"></div>
<div style="left:0.00px;width:58px;text-align:center;position:absolute;top:263.65px;font-size:17.6px;line-height:22px;color:#3c4043;font-weight:normal;white-space:nowrap;">1</div>
<div style="left:0.00px;width:58px;text-align:center;position:absolute;top:298.15px;font-size:17.6px;line-height:22px;color:#3c4043;font-weight:normal;white-space:nowrap;">2</div>
<div style="left:0.00px;width:58px;text-align:center;position:absolute;top:332.65px;font-size:17.6px;line-height:22px;color:#3c4043;font-weight:normal;white-space:nowrap;">3</div>
<div style="left:0.00px;width:58px;text-align:center;position:absolute;top:367.15px;font-size:17.6px;line-height:22px;color:#3c4043;font-weight:normal;white-space:nowrap;">4</div>
<div style="left:0.00px;width:58px;text-align:center;position:absolute;top:401.65px;font-size:17.6px;line-height:22px;color:#3c4043;font-weight:normal;white-space:nowrap;">5</div>
<div style="left:0.00px;width:58px;text-align:center;position:absolute;top:436.15px;font-size:17.6px;line-height:22px;color:#3c4043;font-weight:normal;white-space:nowrap;">6</div>
<div style="left:0.00px;width:58px;text-align:center;position:absolute;top:470.65px;font-size:17.6px;line-height:22px;color:#3c4043;font-weight:normal;white-space:nowrap;">7</div>
<div style="left:0.00px;width:58px;text-align:center;position:absolute;top:505.15px;font-size:17.6px;line-height:22px;color:#3c4043;font-weight:normal;white-space:nowrap;">8</div>
<div style="left:0.00px;width:58px;text-align:center;position:absolute;top:539.40px;font-size:17.6px;line-height:22px;color:#3c4043;font-weight:normal;white-space:nowrap;">9</div>
<div style="left:0.00px;width:58px;text-align:center;position:absolute;top:590.15px;font-size:17.6px;line-height:22px;color:#3c4043;font-weight:normal;white-space:nowrap;">10</div>
<div style="left:0.00px;width:58px;text-align:center;position:absolute;top:641.15px;font-size:17.6px;line-height:22px;color:#3c4043;font-weight:normal;white-space:nowrap;">11</div>
<div style="left:0.00px;width:58px;text-align:center;position:absolute;top:676.67px;font-size:16.6px;line-height:20px;color:#041e49;font-weight:bold;white-space:nowrap;">12</div>
<div style="left:0.00px;width:58px;text-align:center;position:absolute;top:711.12px;font-size:16.6px;line-height:20px;color:#041e49;font-weight:bold;white-space:nowrap;">13</div>
<div style="left:0.00px;width:58px;text-align:center;position:absolute;top:745.57px;font-size:16.6px;line-height:20px;color:#041e49;font-weight:bold;white-space:nowrap;">14</div>
<div style="left:0.00px;width:58px;text-align:center;position:absolute;top:780.02px;font-size:16.6px;line-height:20px;color:#041e49;font-weight:bold;white-space:nowrap;">15</div>
<div style="left:0.00px;width:58px;text-align:center;position:absolute;top:814.47px;font-size:16.6px;line-height:20px;color:#041e49;font-weight:bold;white-space:nowrap;">16</div>
<div style="left:0.00px;width:58px;text-align:center;position:absolute;top:848.92px;font-size:16.6px;line-height:20px;color:#041e49;font-weight:bold;white-space:nowrap;">17</div>
<div style="left:0.00px;width:58px;text-align:center;position:absolute;top:883.37px;font-size:16.6px;line-height:20px;color:#041e49;font-weight:bold;white-space:nowrap;">18</div>
<div style="left:0.00px;width:58px;text-align:center;position:absolute;top:917.82px;font-size:16.6px;line-height:20px;color:#041e49;font-weight:bold;white-space:nowrap;">19</div>
<div style="left:0.00px;width:58px;text-align:center;position:absolute;top:952.27px;font-size:16.6px;line-height:20px;color:#041e49;font-weight:bold;white-space:nowrap;">20</div>
<div style="left:0.00px;width:58px;text-align:center;position:absolute;top:986.72px;font-size:16.6px;line-height:20px;color:#041e49;font-weight:bold;white-space:nowrap;">21</div>
<div style="left:0.00px;width:58px;text-align:center;position:absolute;top:1021.17px;font-size:16.6px;line-height:20px;color:#041e49;font-weight:bold;white-space:nowrap;">22</div>
<div style="left:0.00px;width:58px;text-align:center;position:absolute;top:1055.62px;font-size:16.6px;line-height:20px;color:#041e49;font-weight:bold;white-space:nowrap;">23</div>
<div style="left:0.00px;width:58px;text-align:center;position:absolute;top:1090.07px;font-size:16.6px;line-height:20px;color:#041e49;font-weight:bold;white-space:nowrap;">24</div>
<div style="left:0.00px;width:58px;text-align:center;position:absolute;top:1124.52px;font-size:16.6px;line-height:20px;color:#041e49;font-weight:bold;white-space:nowrap;">25</div>
<div style="left:0.00px;width:58px;text-align:center;position:absolute;top:1158.97px;font-size:16.6px;line-height:20px;color:#041e49;font-weight:bold;white-space:nowrap;">26</div>
<div style="left:0.00px;width:58px;text-align:center;position:absolute;top:1193.42px;font-size:16.6px;line-height:20px;color:#041e49;font-weight:bold;white-space:nowrap;">27</div>
<div style="left:0.00px;width:58px;text-align:center;position:absolute;top:1226.83px;font-size:17.6px;line-height:22px;color:#3c4043;font-weight:normal;white-space:nowrap;">28</div>
<div style="left:0.00px;width:58px;text-align:center;position:absolute;top:1261.28px;font-size:17.6px;line-height:22px;color:#3c4043;font-weight:normal;white-space:nowrap;">29</div>
<div style="position:absolute;left:0.00px;top:219.00px;width:66.50px;height:38.00px;background:#f8f9fa"></div>
<div style="position:absolute;left:59.30px;top:219.00px;width:7.30px;height:38.20px;background:#c4c7c5"></div>
<div style="position:absolute;left:0.00px;top:250.00px;width:66.60px;height:7.20px;background:#c4c7c5"></div>
<svg style="position:absolute;left:27px;top:12px;overflow:visible;" width="41" height="56" viewBox="0 0 41 56"><path d="M0 4.5Q0 0 4.5 0H27L41 14V51.5Q41 56 36.5 56H4.5Q0 56 0 51.5Z" fill="#4ea952"/><path d="M27 0L41 14H27Z" fill="#358a3c"/><rect x="7" y="22" width="27" height="20" fill="#fff"/><rect x="10" y="25" width="8.5" height="5.5" fill="#4ea952"/><rect x="22" y="25" width="9" height="5.5" fill="#4ea952"/><rect x="10" y="33.5" width="8.5" height="5" fill="#4ea952"/><rect x="22" y="33.5" width="9" height="5" fill="#4ea952"/></svg>
<div style="left:90.86px;position:absolute;top:5.07px;font-size:29.8px;line-height:36px;color:#1f1f1f;font-weight:normal;white-space:nowrap;letter-spacing:0.050px;">Product Roadmap</div>
<svg style="position:absolute;left:365px;top:9.5px;overflow:visible;" width="25" height="24" viewBox="0 0 25 24"><path d="M12.5 2.2L15.4 9.6L23.2 10.1L17.1 15.1L19.1 22.6L12.5 18.4L5.9 22.6L7.9 15.1L1.8 10.1L9.6 9.6Z" fill="none" stroke="#444746" stroke-width="2.1" stroke-linejoin="miter"/></svg>
<svg style="position:absolute;left:417px;top:12.5px;overflow:visible;" width="26" height="19" viewBox="0 0 26 19"><path d="M1 2.2Q1 1 2.2 1H9.5L11.8 3.3H23.8Q25 3.3 25 4.5V16.8Q25 18 23.8 18H2.2Q1 18 1 16.8Z" fill="none" stroke="#444746" stroke-width="2"/><path d="M1 1.5H10L12 3.8H1Z" fill="#444746"/><path d="M7.5 11H17M13.5 7.2L17.3 11L13.5 14.8" fill="none" stroke="#444746" stroke-width="2"/></svg>
<svg style="position:absolute;left:467.5px;top:12.5px;overflow:visible;" width="30" height="19" viewBox="0 0 30 19"><path d="M7.5 18H22.5A6 6 0 0 0 23.8 6.2A9 9 0 0 0 6.8 7.3A5.4 5.4 0 0 0 7.5 18Z" fill="none" stroke="#444746" stroke-width="2.1"/><path d="M10.3 11.6L13.3 14.6L19 8.9" fill="none" stroke="#444746" stroke-width="2.1"/></svg>
<div style="left:510.30px;position:absolute;top:9.74px;font-size:19.8px;line-height:24px;color:#5f6368;font-weight:normal;white-space:nowrap;letter-spacing:0.409px;-webkit-text-stroke:0.25px #5f6368;">Saved to Drive</div>
<div style="position:absolute;left:288.00px;top:41.60px;width:88.00px;height:40.40px;background:#e9ebee;border-radius:5px 5px 0 0"></div>
<div style="left:92.43px;position:absolute;top:46.48px;font-size:24.0px;line-height:29px;color:#1f1f1f;font-weight:normal;white-space:nowrap;letter-spacing:-0.146px;">File</div>
<div style="left:156.13px;position:absolute;top:46.48px;font-size:24.0px;line-height:29px;color:#1f1f1f;font-weight:normal;white-space:nowrap;letter-spacing:-0.070px;">Edit</div>
<div style="left:225.49px;position:absolute;top:46.48px;font-size:24.0px;line-height:29px;color:#1f1f1f;font-weight:normal;white-space:nowrap;letter-spacing:-1.391px;">View</div>
<div style="left:299.39px;position:absolute;top:46.48px;font-size:24.0px;line-height:29px;color:#1f1f1f;font-weight:normal;white-space:nowrap;letter-spacing:0.573px;">Insert</div>
<div style="left:388.33px;position:absolute;top:46.48px;font-size:24.0px;line-height:29px;color:#1f1f1f;font-weight:normal;white-space:nowrap;letter-spacing:0.047px;">Format</div>
<div style="left:490.53px;position:absolute;top:46.48px;font-size:24.0px;line-height:29px;color:#1f1f1f;font-weight:normal;white-space:nowrap;letter-spacing:-0.109px;">Data</div>
<div style="left:568.46px;position:absolute;top:46.48px;font-size:24.0px;line-height:29px;color:#1f1f1f;font-weight:normal;white-space:nowrap;letter-spacing:-0.720px;">Tools</div>
<div style="left:650.13px;position:absolute;top:46.48px;font-size:24.0px;line-height:29px;color:#1f1f1f;font-weight:normal;white-space:nowrap;letter-spacing:-0.240px;">Extensions</div>
<div style="left:791.43px;position:absolute;top:46.48px;font-size:24.0px;line-height:29px;color:#1f1f1f;font-weight:normal;white-space:nowrap;letter-spacing:-0.094px;">Help</div>
<div style="position:absolute;left:17.80px;top:93.00px;width:1632.20px;height:65.00px;background:#eff2f8;border-radius:33px"></div>
<div style="position:absolute;left:33.00px;top:105.00px;width:62.00px;height:43.50px;background:#edf1f8;border-radius:0"></div>
<svg style="position:absolute;left:50px;top:113px;overflow:visible;" width="24" height="24" viewBox="0 0 24 24"><circle cx="9.3" cy="9.3" r="7" fill="none" stroke="#444746" stroke-width="2.1"/><path d="M14.3 14.3L22.3 22.5" stroke="#444746" stroke-width="2.3"/></svg>
<svg style="position:absolute;left:108px;top:118px;overflow:visible;" width="21" height="20" viewBox="0 0 21 20"><path d="M5.8 1.6L1.8 5.6L5.8 9.6" fill="none" stroke="#444746" stroke-width="2.1"/><path d="M1.8 5.6H13.2A6 6 0 0 1 13.2 17.6H4.2" fill="none" stroke="#444746" stroke-width="2.1"/></svg>
<svg style="position:absolute;left:160px;top:118px;overflow:visible;" width="21" height="20" viewBox="0 0 21 20"><path d="M15.2 1.6L19.2 5.6L15.2 9.6" fill="none" stroke="#444746" stroke-width="2.1"/><path d="M19.2 5.6H7.8A6 6 0 0 0 7.8 17.6H16.8" fill="none" stroke="#444746" stroke-width="2.1"/></svg>
<svg style="position:absolute;left:209.5px;top:115.5px;overflow:visible;" width="27" height="24" viewBox="0 0 27 24"><path d="M6 8V1.2H21V8" fill="none" stroke="#3a3c3e" stroke-width="2.2"/><path d="M6 16.8H3Q1.8 16.8 1.8 15.6V10.8Q1.8 8 4.6 8H22.7Q25.5 8 25.5 10.8V15.6Q25.5 16.8 24.3 16.8H21" fill="none" stroke="#3a3c3e" stroke-width="2.2"/><rect x="6" y="14.8" width="15" height="6.6" fill="none" stroke="#3a3c3e" stroke-width="2.2"/><circle cx="21.5" cy="11.1" r="1.15" fill="#3a3c3e"/></svg>
<svg style="position:absolute;left:262px;top:113.5px;overflow:visible;" width="26" height="30" viewBox="0 0 26 30"><rect x="6.85" y="1.55" width="15" height="5.5" rx="0.6" fill="none" stroke="#3a3c3e" stroke-width="2.2"/><path d="M6.85 4.5H3.6Q2.55 4.5 2.55 5.6V11.1Q2.55 12.2 3.6 12.2H13.4Q14.5 12.2 14.5 13.3V19" fill="none" stroke="#3a3c3e" stroke-width="2.2"/><rect x="12.35" y="19.5" width="4.4" height="7.9" rx="0.9" fill="none" stroke="#3a3c3e" stroke-width="2.2"/></svg>
<svg style="position:absolute;left:816px;top:129.5px;overflow:visible;" width="4" height="4" viewBox="0 0 4 4"><circle cx="2" cy="1.8" r="1.6" fill="#444746"/></svg>
<svg style="position:absolute;left:847px;top:122px;overflow:visible;" width="13" height="6.6" viewBox="0 0 13 6.6"><path d="M0 0H13L6.5 6.6Z" fill="#444746"/></svg>
<div style="position:absolute;left:885.00px;top:109.00px;width:1.20px;height:32.50px;background:#c7c7c7"></div>
<div style="position:absolute;left:1044.00px;top:109.00px;width:1.20px;height:32.50px;background:#c7c7c7"></div>
<div style="position:absolute;left:1269.00px;top:109.00px;width:1.20px;height:32.50px;background:#c7c7c7"></div>
<div style="position:absolute;left:1464.00px;top:109.00px;width:1.20px;height:32.50px;background:#c7c7c7"></div>
<div style="position:absolute;left:903.60px;top:124.00px;width:16.40px;height:2.20px;background:#444746"></div>
<div style="position:absolute;left:937.30px;top:106.30px;width:55.20px;height:38.40px;box-sizing:border-box;border:1.6px solid #444746;border-radius:7px"></div>
<div style="left:937.40px;width:55px;text-align:center;position:absolute;top:112.07px;font-size:22.3px;line-height:27px;color:#1f1f1f;font-weight:normal;white-space:nowrap;">10</div>
<div style="position:absolute;left:1008.60px;top:124.10px;width:16.40px;height:2.20px;background:#444746"></div>
<div style="position:absolute;left:1015.70px;top:117.00px;width:2.20px;height:16.40px;background:#444746"></div>
<svg style="position:absolute;left:1069px;top:117px;overflow:visible;" width="16" height="19" viewBox="0 0 16 19"><path d="M2.3 1.15H7.6A3.95 3.95 0 0 1 7.6 9.05H2.3M2.3 9.05H8.4A4.2 4.2 0 0 1 8.4 17.45H2.3M2.3 0V18.6" fill="none" stroke="#444746" stroke-width="2.3"/></svg>
<svg style="position:absolute;left:1120px;top:116px;overflow:visible;" width="18" height="22" viewBox="0 0 18 22"><path d="M6.5 2.4H17M1 19.6H11.5M12.6 2.4L6.4 19.6" fill="none" stroke="#444746" stroke-width="2.7"/></svg>
<svg style="position:absolute;left:1168px;top:116px;overflow:visible;" width="28" height="22" viewBox="0 0 28 22"><path d="M1 10.2H26.6" stroke="#444746" stroke-width="2.2"/><path d="M8.8 6.5Q8.8 2.2 13.8 2.2Q18.8 2.2 18.8 6.5" fill="none" stroke="#444746" stroke-width="2.4"/><path d="M8.8 14.2Q8.8 19.8 13.8 19.8Q18.8 19.8 18.8 14.2" fill="none" stroke="#444746" stroke-width="2.4"/></svg>
<svg style="position:absolute;left:1227px;top:114.5px;overflow:visible;" width="16" height="17" viewBox="0 0 16 17"><path d="M1 16.5L8 1L15 16.5M3.8 11H12.2" fill="none" stroke="#444746" stroke-width="2.2"/></svg>
<div style="position:absolute;left:1217.00px;top:135.60px;width:37.20px;height:6.30px;background:#000"></div>
<svg style="position:absolute;left:1289px;top:107.5px;overflow:visible;" width="26" height="25" viewBox="0 0 26 25"><path d="M5 1.5L9.3 5.8" stroke="#444746" stroke-width="2.1"/><path d="M9.3 5.8L2.6 12.5L10.2 20.1L17 13.3Z" fill="none" stroke="#444746" stroke-width="2.3" stroke-linejoin="round"/><path d="M3.5 13.1L16.3 13.1L10.2 19.2Z" fill="#444746"/><path d="M21.5 15.5Q19.3 19 19.3 20.9A2.2 2.2 0 0 0 23.7 20.9Q23.7 19 21.5 15.5Z" fill="#444746"/></svg>
<div style="position:absolute;left:1284.20px;top:135.20px;width:37.60px;height:6.70px;background:#fff"></div>
<svg style="position:absolute;left:1346px;top:115.5px;overflow:visible;" width="24" height="24" viewBox="0 0 24 24"><rect x="1.9" y="1.7" width="20.6" height="20.6" fill="none" stroke="#444746" stroke-width="2.1"/><path d="M12.2 1.5V22.5M1.5 12H22.5" stroke="#444746" stroke-width="1.9"/></svg>
<svg style="position:absolute;left:1399.5px;top:115.5px;overflow:visible;" width="27" height="24" viewBox="0 0 27 24"><path d="M10 1.2H3V7.2M10 22.6H3V15.8M16.8 1.2H23.6V7.2M16.8 22.6H23.6V15.8" fill="none" stroke="#444746" stroke-width="2.1"/><path d="M0.3 11.6H10.2M6.6 7.9L10.3 11.6L6.6 15.3M26.8 11.6H16.6M20.2 7.9L16.5 11.6L20.2 15.3" fill="none" stroke="#444746" stroke-width="2.2"/></svg>
<svg style="position:absolute;left:1441px;top:124px;overflow:visible;" width="12.5" height="6.4" viewBox="0 0 12.5 6.4"><path d="M0 0H12.5L6.25 6.4Z" fill="#444746"/></svg>
<svg style="position:absolute;left:1481.5px;top:114.8px;overflow:visible;" width="24" height="24" viewBox="0 0 24 24"><path d="M0.5 1.9H23.5M5.5 7H18M0.5 12.1H23.5M5.5 17.2H18M0.5 22.4H23.5" stroke="#444746" stroke-width="2.1"/></svg>
<svg style="position:absolute;left:1516.5px;top:124px;overflow:visible;" width="13" height="6.4" viewBox="0 0 13 6.4"><path d="M0 0H13L6.5 6.4Z" fill="#444746"/></svg>
<svg style="position:absolute;left:1550px;top:113px;overflow:visible;" width="21" height="27.5" viewBox="0 0 21 27.5"><path d="M0.5 13.8H20.5" stroke="#444746" stroke-width="2.1"/><path d="M10.5 0.5V9.5M6.5 5.8L10.5 9.8L14.5 5.8M10.5 27V18M6.5 21.7L10.5 17.7L14.5 21.7" fill="none" stroke="#444746" stroke-width="2.1"/></svg>
<svg style="position:absolute;left:1584px;top:124px;overflow:visible;" width="12.8" height="6.4" viewBox="0 0 12.8 6.4"><path d="M0 0H12.8L6.4 6.4Z" fill="#444746"/></svg>
<div style="left:14.33px;position:absolute;top:181.27px;font-size:20.3px;line-height:25px;color:#1f1f1f;font-weight:normal;white-space:nowrap;letter-spacing:-0.549px;">L12:L27</div>
<svg style="position:absolute;left:133px;top:191px;overflow:visible;" width="13" height="6.6" viewBox="0 0 13 6.6"><path d="M0 0H13L6.5 6.6Z" fill="#444746"/></svg>
<div style="position:absolute;left:166.00px;top:181.60px;width:1.20px;height:26.80px;background:#c7c7c7"></div>
<svg style="position:absolute;left:175px;top:175px;overflow:visible;" width="40" height="40" viewBox="0 0 40 40"><g fill="none" stroke="#8f9397" stroke-width="1.9"><path d="M22.6 12.2Q22.9 9.4 20.4 9.4Q17.9 9.4 17.4 12.6L14.9 26.4Q14.3 29.8 12 29.8Q9.7 29.8 10 27.4"/><path d="M13.2 16.6H24M26.2 16.6H32.6M18.3 26.9H24M26.2 26.9H32.6"/><path d="M21.3 16.6L30.6 26.9M30.2 16.6L20.9 26.9" stroke-width="2.1"/></g><circle cx="22.4" cy="11.8" r="1.5" fill="#8f9397"/><circle cx="10.5" cy="27.9" r="1.5" fill="#8f9397"/></svg>
<div style="left:222.93px;position:absolute;top:181.27px;font-size:20.3px;line-height:25px;color:#1f1f1f;font-weight:normal;white-space:nowrap;letter-spacing:-1.743px;">FALSE</div>
<div style="position:absolute;left:287.70px;top:80.50px;width:528.80px;height:1055.10px;background:#fff;border-radius:0 6px 8px 8px;box-shadow:0 4px 9px 3px rgba(60,64,67,0.15),0 1px 3px rgba(60,64,67,0.2)"></div>
<div style="position:absolute;left:288.00px;top:41.60px;width:88.00px;height:39.00px;background:linear-gradient(to bottom,#e9ebee 0%,#e9ebee 72%,#dfe1e4 100%);border-radius:5px 5px 0 0"></div>
<div style="left:299.39px;position:absolute;top:46.48px;font-size:24.0px;line-height:29px;color:#1f1f1f;font-weight:normal;white-space:nowrap;letter-spacing:0.573px;">Insert</div>
<svg style="position:absolute;left:311px;top:105.85px;overflow:visible;" width="26" height="26" viewBox="0 0 26 26"><rect x="3" y="3.3" width="20" height="19.5" rx="1.6" fill="none" stroke="#202124" stroke-width="1.9"/></svg>
<div style="left:351.50px;position:absolute;top:103.61px;font-size:23.5px;line-height:29px;color:#1f1f1f;font-weight:normal;white-space:nowrap;">Cells</div>
<svg style="position:absolute;left:777px;top:113.05px;overflow:visible;" width="12" height="11.2" viewBox="0 0 12 11.2"><path d="M0.2 0L11.8 5.6L0.2 11.2Z" fill="#7a7a7a"/></svg>
<svg style="position:absolute;left:311px;top:158.35px;overflow:visible;" width="26" height="26" viewBox="0 0 26 26"><rect x="3" y="3.3" width="20" height="19.5" rx="1.6" fill="none" stroke="#202124" stroke-width="1.9"/><path d="M3 9.8H23M3 16.2H23" fill="none" stroke="#202124" stroke-width="1.9"/></svg>
<div style="left:351.50px;position:absolute;top:156.11px;font-size:23.5px;line-height:29px;color:#1f1f1f;font-weight:normal;white-space:nowrap;">Rows</div>
<svg style="position:absolute;left:777px;top:165.54999999999998px;overflow:visible;" width="12" height="11.2" viewBox="0 0 12 11.2"><path d="M0.2 0L11.8 5.6L0.2 11.2Z" fill="#7a7a7a"/></svg>
<svg style="position:absolute;left:311px;top:210.85px;overflow:visible;" width="26" height="26" viewBox="0 0 26 26"><rect x="3" y="3.3" width="20" height="19.5" rx="1.6" fill="none" stroke="#202124" stroke-width="1.9"/><path d="M9.7 3.3V22.8M16.3 3.3V22.8" fill="none" stroke="#202124" stroke-width="1.9"/></svg>
<div style="left:351.50px;position:absolute;top:208.61px;font-size:23.5px;line-height:29px;color:#1f1f1f;font-weight:normal;white-space:nowrap;">Columns</div>
<svg style="position:absolute;left:777px;top:218.04999999999998px;overflow:visible;" width="12" height="11.2" viewBox="0 0 12 11.2"><path d="M0.2 0L11.8 5.6L0.2 11.2Z" fill="#7a7a7a"/></svg>
<svg style="position:absolute;left:311px;top:263.35px;overflow:visible;" width="26" height="26" viewBox="0 0 26 26"><rect x="1.2" y="4.8" width="23.6" height="17.5" rx="1.6" fill="none" stroke="#202124" stroke-width="1.9"/><path d="M14.6 4.8H24.8V10.5H14.6Z" fill="#3f4244"/></svg>
<div style="left:351.50px;position:absolute;top:261.11px;font-size:23.5px;line-height:29px;color:#1f1f1f;font-weight:normal;white-space:nowrap;">Sheet</div>
<div style="right:811.00px;position:absolute;top:261.11px;font-size:23.5px;line-height:29px;color:#7c8186;font-weight:normal;white-space:nowrap;-webkit-text-stroke:0.45px #7c8186;letter-spacing:0px;">Shift+F11</div>
<div style="position:absolute;left:287.70px;top:316.00px;width:528.80px;height:1.20px;background:#dadce0"></div>
<svg style="position:absolute;left:311px;top:343.77000000000004px;overflow:visible;" width="26" height="26" viewBox="0 0 26 26"><rect x="3" y="3.3" width="20" height="19.5" rx="1.6" fill="none" stroke="#202124" stroke-width="1.9"/><path d="M3 9H23M9.7 9V22.8M16.3 9V22.8" fill="none" stroke="#202124" stroke-width="1.9"/></svg>
<div style="left:351.50px;position:absolute;top:341.53px;font-size:23.5px;line-height:29px;color:#1f1f1f;font-weight:normal;white-space:nowrap;">Tables</div>
<div style="position:absolute;left:287.70px;top:396.00px;width:528.80px;height:1.20px;background:#dadce0"></div>
<svg style="position:absolute;left:311px;top:424.19000000000005px;overflow:visible;" width="26" height="26" viewBox="0 0 26 26"><rect x="3" y="3.3" width="20" height="19.5" rx="1.6" fill="none" stroke="#202124" stroke-width="1.9"/><path d="M7.9 10.6V19.6M13 7.4V19.6M18.1 15.5V19.6" fill="none" stroke="#202124" stroke-width="2.3"/></svg>
<div style="left:351.50px;position:absolute;top:421.95px;font-size:23.5px;line-height:29px;color:#1f1f1f;font-weight:normal;white-space:nowrap;">Chart</div>
<svg style="position:absolute;left:311px;top:476.69000000000005px;overflow:visible;" width="26" height="26" viewBox="0 0 26 26"><path d="M2 2.2Q2 1 3.2 1H8V7.4H2Z" fill="#3f4244"/><path d="M11 1H22.8Q24 1 24 2.2V7.4H11Z" fill="#3f4244"/><path d="M2 10.4H8V23.6H3.2Q2 23.6 2 22.4Z" fill="#3f4244"/><path d="M21.5 11V15.5A5.4 5.4 0 0 1 16.1 20.9H10.8" fill="none" stroke="#202124" stroke-width="2.3"/><path d="M17.2 15L21.4 10.6L25.7 15M14.9 16.6L10.5 20.9L14.9 25.3" fill="none" stroke="#202124" stroke-width="2.3"/></svg>
<div style="left:351.50px;position:absolute;top:474.45px;font-size:23.5px;line-height:29px;color:#1f1f1f;font-weight:normal;white-space:nowrap;">Pivot table</div>
<svg style="position:absolute;left:311px;top:529.19px;overflow:visible;" width="26" height="26" viewBox="0 0 26 26"><rect x="3" y="2.8" width="20" height="20" rx="1.6" fill="none" stroke="#202124" stroke-width="1.9"/><path d="M6.2 17.5L9.7 12.7L12 15.8L15.3 11L20 17.5Z" fill="#3f4244"/></svg>
<div style="left:351.50px;position:absolute;top:526.95px;font-size:23.5px;line-height:29px;color:#1f1f1f;font-weight:normal;white-space:nowrap;">Image</div>
<svg style="position:absolute;left:777px;top:536.3900000000001px;overflow:visible;" width="12" height="11.2" viewBox="0 0 12 11.2"><path d="M0.2 0L11.8 5.6L0.2 11.2Z" fill="#7a7a7a"/></svg>
<svg style="position:absolute;left:311px;top:581.69px;overflow:visible;" width="26" height="26" viewBox="0 0 26 26"><rect x="3" y="3.3" width="20" height="20" rx="1.6" fill="none" stroke="#202124" stroke-width="1.9"/><circle cx="10.2" cy="10.6" r="4.2" fill="#3f4244"/><rect x="13" y="14" width="7" height="6.7" fill="#3f4244"/></svg>
<div style="left:351.50px;position:absolute;top:579.45px;font-size:23.5px;line-height:29px;color:#1f1f1f;font-weight:normal;white-space:nowrap;">Drawing</div>
<div style="position:absolute;left:287.70px;top:634.00px;width:528.80px;height:1.20px;background:#dadce0"></div>
<svg style="position:absolute;left:311px;top:662.11px;overflow:visible;" width="26" height="26" viewBox="0 0 26 26"><path d="M6.8 3.1H19.6V5.9H11.2L15.7 12.8L11.2 19.7H19.6V22.5H6.8V20.3L12.1 12.8L6.8 5.3Z" fill="#3f4244"/></svg>
<div style="left:351.50px;position:absolute;top:659.87px;font-size:23.5px;line-height:29px;color:#1f1f1f;font-weight:normal;white-space:nowrap;">Function</div>
<svg style="position:absolute;left:777px;top:669.3100000000001px;overflow:visible;" width="12" height="11.2" viewBox="0 0 12 11.2"><path d="M0.2 0L11.8 5.6L0.2 11.2Z" fill="#7a7a7a"/></svg>
<svg style="position:absolute;left:311px;top:714.61px;overflow:visible;" width="26" height="26" viewBox="0 0 26 26"><path d="M10.4 7.55H6.4A5.35 5.35 0 0 0 6.4 18.25H10.4M15.5 7.55H19.5A5.35 5.35 0 0 1 19.5 18.25H15.5" fill="none" stroke="#202124" stroke-width="2.1"/><path d="M8.4 12.9H17.5" stroke="#202124" stroke-width="2.1"/></svg>
<div style="left:351.50px;position:absolute;top:712.37px;font-size:23.5px;line-height:29px;color:#1f1f1f;font-weight:normal;white-space:nowrap;">Link</div>
<div style="right:811.00px;position:absolute;top:712.37px;font-size:23.5px;line-height:29px;color:#7c8186;font-weight:normal;white-space:nowrap;-webkit-text-stroke:0.45px #7c8186;letter-spacing:0px;">&#8984;K</div>
<div style="position:absolute;left:287.70px;top:767.00px;width:528.80px;height:1.20px;background:#dadce0"></div>
<div style="position:absolute;left:289.20px;top:781.18px;width:527.30px;height:52.50px;background:#f1f3f4"></div>
<svg style="position:absolute;left:311px;top:795.03px;overflow:visible;" width="26" height="26" viewBox="0 0 26 26"><rect x="3" y="3.3" width="20" height="20" rx="1.4" fill="none" stroke="#202124" stroke-width="1.9"/><path d="M7.5 13.5L10.8 16.8L18.2 9.4" fill="none" stroke="#202124" stroke-width="2"/></svg>
<div style="left:351.50px;position:absolute;top:792.79px;font-size:23.5px;line-height:29px;color:#1f1f1f;font-weight:normal;white-space:nowrap;">Checkbox</div>
<svg style="position:absolute;left:311px;top:847.53px;overflow:visible;" width="26" height="26" viewBox="0 0 26 26"><rect x="0.5" y="4.2" width="27" height="17" rx="8.5" fill="none" stroke="#202124" stroke-width="1.9"/><path d="M12.5 11H21.5L17 15.4Z" fill="#3f4244"/></svg>
<div style="left:351.50px;position:absolute;top:845.29px;font-size:23.5px;line-height:29px;color:#1f1f1f;font-weight:normal;white-space:nowrap;">Dropdown</div>
<svg style="position:absolute;left:311px;top:900.03px;overflow:visible;" width="26" height="26" viewBox="0 0 26 26"><circle cx="13" cy="13" r="11.7" fill="none" stroke="#202124" stroke-width="1.9"/><circle cx="8.9" cy="9.6" r="1.6" fill="#3f4244"/><circle cx="17.4" cy="9.6" r="1.6" fill="#3f4244"/><path d="M7 15.6H19Q17.8 19.4 13 19.4Q8.2 19.4 7 15.6Z" fill="#3f4244"/></svg>
<div style="left:351.50px;position:absolute;top:897.79px;font-size:23.5px;line-height:29px;color:#1f1f1f;font-weight:normal;white-space:nowrap;">Emoji</div>
<svg style="position:absolute;left:311px;top:952.53px;overflow:visible;" width="26" height="26" viewBox="0 0 26 26"><rect x="-0.6" y="4.6" width="20.4" height="8.8" rx="4.4" fill="none" stroke="#202124" stroke-width="1.9"/><circle cx="4.4" cy="9" r="2" fill="#3f4244"/><rect x="5.9" y="11.9" width="20.7" height="9" rx="4.5" fill="#fff" stroke="#202124" stroke-width="1.9"/><path d="M17.6 15.2H22.8L20.2 18Z" fill="#3f4244"/></svg>
<div style="left:351.50px;position:absolute;top:950.29px;font-size:23.5px;line-height:29px;color:#1f1f1f;font-weight:normal;white-space:nowrap;">Smart chips</div>
<svg style="position:absolute;left:777px;top:959.73px;overflow:visible;" width="12" height="11.2" viewBox="0 0 12 11.2"><path d="M0.2 0L11.8 5.6L0.2 11.2Z" fill="#7a7a7a"/></svg>
<div style="position:absolute;left:287.70px;top:1005.00px;width:528.80px;height:1.20px;background:#dadce0"></div>
<svg style="position:absolute;left:311px;top:1032.9499999999998px;overflow:visible;" width="26" height="26" viewBox="0 0 26 26"><path d="M1.5 25.3V2.2Q1.5 1.05 2.7 1.05H23.6Q24.8 1.05 24.8 2.2V18.8Q24.8 19.95 23.6 19.95H6.6L1.5 24.8Z" fill="none" stroke="#202124" stroke-width="1.9"/><path d="M1.5 20.5L6 19.95L1.5 24.5Z" fill="#3f4244"/><path d="M13.3 4.6V15.5M7.8 10.05H18.8" stroke="#202124" stroke-width="2"/></svg>
<div style="left:351.50px;position:absolute;top:1030.71px;font-size:23.5px;line-height:29px;color:#1f1f1f;font-weight:normal;white-space:nowrap;">Comment</div>
<div style="right:811.00px;position:absolute;top:1030.71px;font-size:23.5px;line-height:29px;color:#7c8186;font-weight:normal;white-space:nowrap;-webkit-text-stroke:0.45px #7c8186;letter-spacing:0px;">&#8984;+Option+M</div>
<svg style="position:absolute;left:311px;top:1085.4499999999998px;overflow:visible;" width="26" height="26" viewBox="0 0 26 26"><path d="M15.3 22.8H4.2Q3 22.8 3 21.6V3.4Q3 2.2 4.2 2.2H22.1Q23.3 2.2 23.3 3.4V14.8Z" fill="none" stroke="#202124" stroke-width="1.9"/><path d="M15.5 22.6V15.8H23.1Z" fill="#3f4244"/><path d="M6.8 9.2H18.2M6.8 13.9H11.6" stroke="#202124" stroke-width="2"/></svg>
<div style="left:351.50px;position:absolute;top:1083.21px;font-size:23.5px;line-height:29px;color:#1f1f1f;font-weight:normal;white-space:nowrap;">Note</div>
<div style="right:811.00px;position:absolute;top:1083.21px;font-size:23.5px;line-height:29px;color:#7c8186;font-weight:normal;white-space:nowrap;-webkit-text-stroke:0.45px #7c8186;letter-spacing:0px;">Shift+F2</div>
</div></body></html>
